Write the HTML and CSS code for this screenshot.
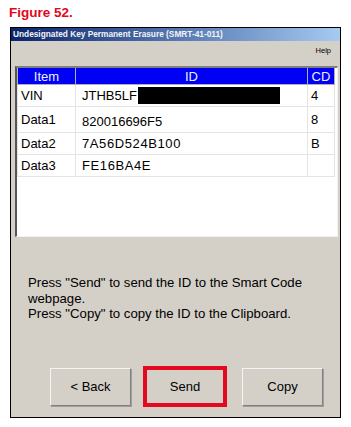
FILE: index.html
```html
<!DOCTYPE html>
<html lang="en">
<head>
  <meta charset="UTF-8" />
  <title>Figure 52</title>
  <link rel="stylesheet" href="styles.css">
</head>
<body>
  <div class="figure-title">Figure 52.</div>

  <div class="window">
    <div class="title-bar">Undesignated Key Permanent Erasure (SMRT-41-011)</div>
    <div class="menu-bar"><span class="menu-item">Help</span></div>

    <div class="list-panel">
      <table class="id-table">
        <thead>
          <tr>
            <th class="col-item">Item</th>
            <th class="col-id">ID</th>
            <th class="col-cd">CD</th>
          </tr>
        </thead>
        <tbody>
          <tr>
            <td>VIN</td>
            <td>JTHB5LF<span class="redacted"></span></td>
            <td>4</td>
          </tr>
          <tr>
            <td>Data1</td>
            <td class="low">820016696F5</td>
            <td>8</td>
          </tr>
          <tr>
            <td>Data2</td>
            <td class="spaced">7A56D524B100</td>
            <td>B</td>
          </tr>
          <tr>
            <td>Data3</td>
            <td class="spaced">FE16BA4E</td>
            <td></td>
          </tr>
        </tbody>
      </table>
    </div>

    <div class="message">
      <p>Press "Send" to send the ID to the Smart Code webpage.</p>
      <p>Press "Copy" to copy the ID to the Clipboard.</p>
    </div>

    <div class="buttons-row">
      <button class="win-button">&lt; Back</button>
      <button class="win-button send">Send</button>
      <button class="win-button copy">Copy</button>
    </div>
  </div>
</body>
</html>
```

FILE: styles.css
```css
body {
  margin: 0;
  background-color: #ffffff;
  font-family: 'Liberation Sans', Arial, sans-serif;
  color: #000;
}

.figure-title {
  color: #e3061c;
  font-weight: bold;
  font-size: 13.5px;
  line-height: 16px;
  padding: 5px 0 0 9px;
  height: 22px;
}

.window {
  margin-left: 10px;
  width: 329px;
  height: 389px;
  border: 1px solid #000;
  background-color: #d4d0c8;
  display: flex;
  flex-direction: column;
}

.title-bar {
  height: 13px;
  line-height: 13px;
  padding-left: 2px;
  font-size: 8.3px;
  font-weight: bold;
  color: #f4f4f4;
  background: linear-gradient(to right, #0a246a, #5d7fb8 55%, #a6caf0);
  white-space: nowrap;
}

.menu-bar {
  height: 18px;
  display: flex;
  justify-content: flex-end;
  align-items: center;
  padding-right: 9px;
}

.menu-item {
  font-size: 7.5px;
}

.list-panel {
  margin: 7px 2px 0 4px;
  height: 168px;
  background-color: #fff;
  border-top: 2px solid #808080;
  border-left: 2px solid #555;
  border-right: 1px solid #f2f2f2;
  border-bottom: 1px solid #f2f2f2;
}

.id-table {
  border-collapse: collapse;
  font-size: 13px;
}

.id-table th {
  background-color: #0000f4;
  color: #eef0ff;
  font-weight: normal;
  height: 16px;
  padding: 0;
  border: 1px solid #b0b0b0;
  border-top: none;
  line-height: 15px;
}

.col-item { width: 57px; }
.col-id { width: 231px; }
.col-cd { width: 26px; }

.id-table td {
  height: 21px;
  padding: 0 0 0 3px;
  border: 1px solid #e4e4e4;
  border-top: none;
  white-space: nowrap;
}

.id-table td:nth-child(2) {
  padding-left: 6px;
}

.id-table td.low {
  padding-top: 4px;
}

.id-table td.spaced {
  letter-spacing: 0.6px;
}

.redacted {
  display: inline-block;
  width: 142px;
  height: 17px;
  background-color: #000;
  vertical-align: -4px;
  margin-left: 1px;
}

.message {
  padding: 38px 0 0 17px;
  font-size: 13.2px;
  line-height: 15.5px;
  height: 91px;
}

.message p {
  margin: 0;
  width: 292px;
}

.buttons-row {
  display: flex;
  align-items: center;
  gap: 12px;
  padding-left: 39px;
}

.win-button {
  width: 81px;
  height: 38px;
  font-family: 'Liberation Sans', Arial, sans-serif;
  font-size: 13px;
  color: #000;
  background-color: #d4d0c8;
  border: 1px solid;
  border-color: #f4f4f4 #808080 #808080 #f4f4f4;
  box-shadow: 1px 1px 0 #a0a0a0;
  padding: 0;
}

.win-button.send {
  width: 84px;
  height: 41px;
  border: 4px solid #e4091f;
  box-shadow: none;
}

.win-button.copy {
  margin-left: 3px;
}
```
